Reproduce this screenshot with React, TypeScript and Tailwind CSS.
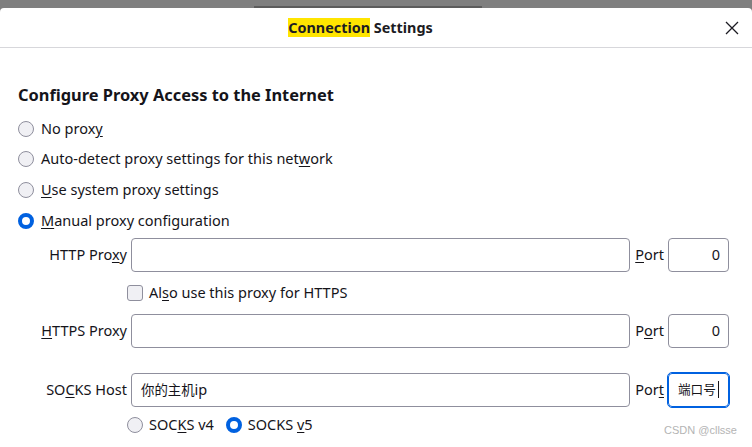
import type { ReactNode } from 'react';

const font = { fontFamily: '"Noto Sans", "Noto Sans CJK SC", sans-serif' };

function Radio({ checked }: { checked?: boolean }) {
  return checked ? (
    <span className="w-4 h-4 rounded-full border-[4px] border-[#0061e0] bg-white shrink-0" />
  ) : (
    <span className="w-4 h-4 rounded-full border border-[#8f8f9d] bg-[#f0f0f4] shrink-0" />
  );
}

function RadioRow({ checked, h, children }: { checked?: boolean; h: string; children: ReactNode }) {
  return (
    <div className={`flex items-center gap-[7px] ${h}`}>
      <Radio checked={checked} />
      <span>{children}</span>
    </div>
  );
}

function U({ children }: { children: ReactNode }) {
  return <span className="underline underline-offset-2">{children}</span>;
}

function TextBox({ value, align = 'left' }: { value?: ReactNode; align?: 'left' | 'right' }) {
  return (
    <div
      className={`h-[34px] border border-[#8f8f9d] rounded-[4px] flex items-center px-[8px] whitespace-nowrap ${
        align === 'right' ? 'justify-end' : 'justify-start'
      }`}
    >
      {value}
    </div>
  );
}

function ProxyRow({ label, value, port, focused }: { label: ReactNode; value?: ReactNode; port: ReactNode; focused?: ReactNode }) {
  return (
    <div className="grid grid-cols-[109px_1fr_auto_61px] gap-x-1 items-center">
      <div className="text-right whitespace-nowrap">{label}</div>
      <TextBox value={value} />
      <div className="pl-px">{port}</div>
      {focused ? (
        <div className="h-[34px] border border-[#0061e0] outline outline-1 outline-[#0061e0] rounded-[4px] flex items-center pl-[9px] whitespace-nowrap overflow-hidden">
          {focused}
        </div>
      ) : (
        <TextBox value="0" align="right" />
      )}
    </div>
  );
}

export default function App() {
  return (
    <div className="w-[752px] h-[447px] bg-[#7f7f7f] overflow-hidden relative text-[14.5px] text-[#15141a]" style={font}>
      <div className="h-2 relative">
        <div className="absolute left-[254px] top-[6px] w-[228px] h-[2px] bg-[#5c5c5c]" />
      </div>
      <div className="bg-white rounded-t-[4px] h-[439px]">
        {/* Header */}
        <div className="h-10 flex items-center justify-center relative border-b border-[#d7d7db] pr-[31px]">
          <span className="font-bold text-[14.4px] text-[#1c1b22]">
            <span className="bg-[#ffe500]">Connection</span> Settings
          </span>
          <button className="absolute right-[13px] top-[13px] w-[14px] h-[14px] text-[#1c1b22]">
            <svg viewBox="0 0 14 14" className="w-[14px] h-[14px]" fill="none" stroke="currentColor" strokeWidth={1.3}>
              <path d="M1 1l12 12M13 1L1 13" />
            </svg>
          </button>
        </div>

        {/* Body */}
        <div className="pl-[18px] pr-[23px] pt-[36px]">
          <h2 className="font-bold text-[16.4px] leading-[22px] mb-[7px]">Configure Proxy Access to the Internet</h2>
          <div className="flex flex-col">
            <RadioRow h="h-[31px]">
              No prox<U>y</U>
            </RadioRow>
            <RadioRow h="h-[30px]">
              Auto-detect proxy settings for this net<U>w</U>ork
            </RadioRow>
            <RadioRow h="h-[31px]">
              <U>U</U>se system proxy settings
            </RadioRow>
            <RadioRow checked h="h-[31px]">
              <U>M</U>anual proxy configuration
            </RadioRow>
          </div>

          <div className="mt-[2px] flex flex-col">
            <ProxyRow
              label={
                <>
                  HTTP Pro<U>x</U>y
                </>
              }
              port={
                <>
                  <U>P</U>ort
                </>
              }
            />
            <div className="h-[42px] flex items-center gap-[6px] pl-[109px]">
              <span className="w-4 h-4 rounded-[3px] border border-[#8f8f9d] bg-[#f0f0f4] shrink-0" />
              <span>
                Al<U>s</U>o use this proxy for HTTPS
              </span>
            </div>
            <ProxyRow
              label={
                <>
                  <U>H</U>TTPS Proxy
                </>
              }
              port={
                <>
                  P<U>o</U>rt
                </>
              }
            />
            <div className="h-[25px]" />
            <ProxyRow
              label={
                <>
                  SO<U>C</U>KS Host
                </>
              }
              value={
                <span className="pl-px">
                  <span className="text-[13.4px]">你的主机</span>ip
                </span>
              }
              port={
                <>
                  Por<U>t</U>
                </>
              }
              focused={
                <span className="flex items-center text-[12.6px]">
                  端口号
                  <span className="w-px h-[17px] bg-[#15141a] ml-[2px]" />
                </span>
              }
            />
            <div className="h-[36px] flex items-center pl-[109px] gap-[6px]">
              <Radio />
              <span className="mr-[6px]">
                SOC<U>K</U>S v4
              </span>
              <Radio checked />
              <span>
                SOCKS <U>v</U>5
              </span>
            </div>
          </div>
        </div>
      </div>
      <div
        className="absolute right-[15px] bottom-[9px] text-[11px] text-[#b4b4b4]"
        style={{ fontFamily: '"Liberation Sans", sans-serif' }}
      >
        CSDN @cllsse
      </div>
    </div>
  );
}
